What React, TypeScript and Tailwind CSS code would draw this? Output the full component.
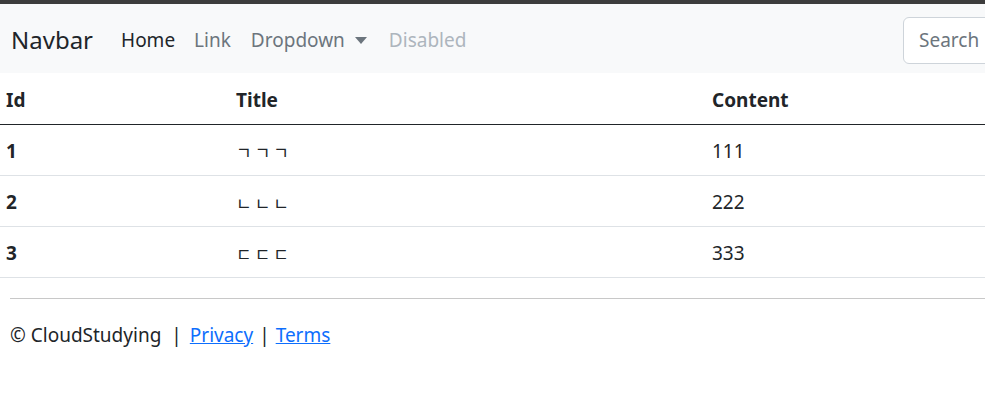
import React from 'react';

const rows = [
  { id: 1, title: 'ㄱㄱㄱ', content: '111' },
  { id: 2, title: 'ㄴㄴㄴ', content: '222' },
  { id: 3, title: 'ㄷㄷㄷ', content: '333' },
];

const font = { fontFamily: '"Noto Sans", "Noto Sans CJK KR", sans-serif' };

const App = () => {
  return (
    <div className="w-[985px] h-[400px] overflow-hidden bg-white text-[#212529]" style={font}>
      <div className="w-[1150px]">
        <div className="h-[4px] bg-[#3c3c3c]"></div>

        <nav className="h-[69px] bg-[#f8f9fa] flex items-center pl-[11px] pr-[12px] pt-[3px]">
          <span className="text-[24px] text-[#212529] mr-[28px] leading-none">Navbar</span>
          <ul className="flex items-center text-[19px] leading-none">
            <li className="pr-[19px] text-[#212529]">Home</li>
            <li className="pr-[20px] text-[#6c757d]">Link</li>
            <li className="pr-[22px] text-[#6c757d] flex items-center">
              Dropdown
              <span className="ml-[10px] w-0 h-0 border-l-[6px] border-r-[6px] border-t-[7px] border-l-transparent border-r-transparent border-t-[#6c757d]"></span>
            </li>
            <li className="text-[#adb5bd]">Disabled</li>
          </ul>
          <input
            className="ml-auto w-[235px] h-[47px] rounded-[6px] border border-[#ced4da] bg-white px-[15px] text-[19px] placeholder:text-[#6c757d] outline-none"
            placeholder="Search"
          />
        </nav>

        <table className="w-full border-collapse text-[19px]">
          <thead>
            <tr className="h-[51px] border-b border-[#212529]">
              <th className="w-[230px] text-left font-bold px-[6px] pt-[4px]">Id</th>
              <th className="w-[476px] text-left font-bold px-[6px] pt-[4px]">Title</th>
              <th className="text-left font-bold px-[6px] pt-[4px]">Content</th>
            </tr>
          </thead>
          <tbody>
            {rows.map(row => (
              <tr key={row.id} className="h-[51px] border-b border-[#dee2e6]">
                <th className="text-left font-bold px-[6px] pt-[4px]">{row.id}</th>
                <td className="px-[6px] pt-[4px]" style={{ fontFamily: '"Noto Sans CJK KR", sans-serif' }}>
                  <span className="text-[17px] tracking-[3px]">{row.title}</span>
                </td>
                <td className="px-[6px] pt-[4px]">{row.content}</td>
              </tr>
            ))}
          </tbody>
        </table>

        <footer className="px-[10px] pt-[20px]">
          <hr className="border-t border-[#c8c8c8]" />
          <p className="mt-[22px] text-[19px] flex items-center">
            <span>© CloudStudying</span>
            <span className="ml-[10px] mr-[8px]">|</span>
            <a href="#" className="text-[#0d6efd] underline">Privacy</a>
            <span className="mx-[6px]">|</span>
            <a href="#" className="text-[#0d6efd] underline">Terms</a>
          </p>
        </footer>
      </div>
    </div>
  );
};

export default App;
